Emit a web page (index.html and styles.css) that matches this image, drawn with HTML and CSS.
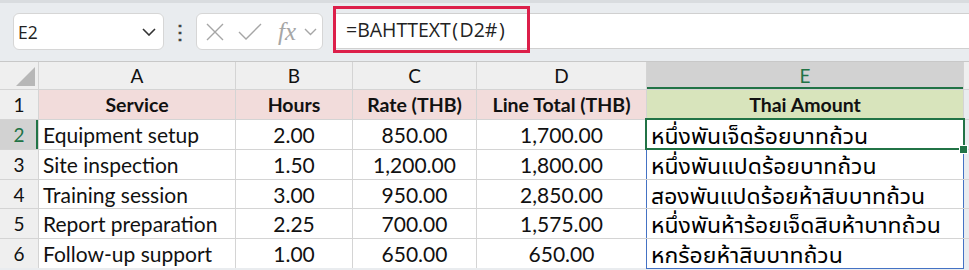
FILE: index.html
```html
<!DOCTYPE html>
<html lang="en">
<head>
    <meta charset="UTF-8">
    <title>BAHTTEXT</title>
    <link rel="stylesheet" href="styles.css">
</head>
<body>
    <div class="toolbar">
        <div class="name-box">
            <span>E2</span>
            <svg class="chev" width="14" height="8" viewBox="0 0 14 8"><path d="M1 1 L7 7 L13 1" fill="none" stroke="#333" stroke-width="1.6"/></svg>
        </div>
        <div class="dots">⋮</div>
        <div class="fx-box">
            <svg width="20" height="20" viewBox="0 0 20 20"><path d="M2 2 L18 18 M18 2 L2 18" stroke="#a6a6a6" stroke-width="1.4"/></svg>
            <svg width="26" height="20" viewBox="0 0 26 20"><path d="M2 10 L9 17 L24 2" fill="none" stroke="#a6a6a6" stroke-width="1.4"/></svg>
            <span class="fx">fx</span>
            <svg width="13" height="8" viewBox="0 0 13 8"><path d="M1 1 L6.5 6.5 L12 1" fill="none" stroke="#a6a6a6" stroke-width="1.4"/></svg>
        </div>
        <div class="formula-bar">
            <div class="formula">=BAHTTEXT<span class="paren">(</span>D2#<span class="paren">)</span></div>
        </div>
    </div>

    <div class="sheet">
        <div class="corner"><span class="tri"></span></div>
        <div class="col-head">A</div>
        <div class="col-head">B</div>
        <div class="col-head">C</div>
        <div class="col-head">D</div>
        <div class="col-head active">E</div>
        <div class="col-head rest"></div>

        <div class="row-head">1</div>
        <div class="cell th">Service</div>
        <div class="cell th">Hours</div>
        <div class="cell th">Rate (THB)</div>
        <div class="cell th">Line Total (THB)</div>
        <div class="cell th thai-head">Thai Amount</div>
        <div class="cell rest"></div>

        <div class="row-head active">2</div>
        <div class="cell">Equipment setup</div>
        <div class="cell num">2.00</div>
        <div class="cell num">850.00</div>
        <div class="cell num">1,700.00</div>
        <div class="cell thai selected">หนึ่งพันเจ็ดร้อยบาทถ้วน</div>
        <div class="cell rest"></div>

        <div class="row-head">3</div>
        <div class="cell">Site inspection</div>
        <div class="cell num">1.50</div>
        <div class="cell num">1,200.00</div>
        <div class="cell num">1,800.00</div>
        <div class="cell thai spill">หนึ่งพันแปดร้อยบาทถ้วน</div>
        <div class="cell rest"></div>

        <div class="row-head">4</div>
        <div class="cell">Training session</div>
        <div class="cell num">3.00</div>
        <div class="cell num">950.00</div>
        <div class="cell num">2,850.00</div>
        <div class="cell thai spill">สองพันแปดร้อยห้าสิบบาทถ้วน</div>
        <div class="cell rest"></div>

        <div class="row-head">5</div>
        <div class="cell">Report preparation</div>
        <div class="cell num">2.25</div>
        <div class="cell num">700.00</div>
        <div class="cell num">1,575.00</div>
        <div class="cell thai spill">หนึ่งพันห้าร้อยเจ็ดสิบห้าบาทถ้วน</div>
        <div class="cell rest"></div>

        <div class="row-head">6</div>
        <div class="cell">Follow-up support</div>
        <div class="cell num">1.00</div>
        <div class="cell num">650.00</div>
        <div class="cell num">650.00</div>
        <div class="cell thai spill last">หกร้อยห้าสิบบาทถ้วน</div>
        <div class="cell rest"></div>
    </div>
</body>
</html>
```

FILE: styles.css
```css
:root {
    --green: #217346;
    --blue: #4472c4;
    --grid: #d4d4d4;
    --head: #efefef;
}

* {
    box-sizing: border-box;
    margin: 0;
    padding: 0;
}

body {
    font-family: Lato, "Noto Sans", sans-serif;
    background: #e9ecef;
    width: 969px;
    height: 270px;
    overflow: hidden;
}

/* formula bar area */
.toolbar {
    height: 61px;
    display: flex;
    align-items: flex-start;
    border-top: 3px solid #d9dcdf;
    padding-top: 10px;
}

.name-box {
    width: 151px;
    height: 37px;
    margin-left: 13px;
    background: white;
    border: 1px solid #d6d6d6;
    border-radius: 6px;
    display: flex;
    align-items: center;
    justify-content: space-between;
    padding: 0 7px 0 4px;
    font-family: "Open Sans", sans-serif;
    font-size: 17.5px;
    color: #222;
}

.dots {
    width: 32px;
    text-align: center;
    font-size: 20px;
    line-height: 37px;
    color: #444;
    font-weight: bold;
}

.fx-box {
    width: 127px;
    height: 37px;
    background: white;
    border: 1px solid #d6d6d6;
    border-radius: 6px;
    display: flex;
    align-items: center;
    gap: 12px;
    padding-left: 8px;
}

.fx-box .fx {
    font-family: "Liberation Serif", serif;
    font-style: italic;
    font-size: 25px;
    line-height: 1;
    color: #a6a6a6;
    margin-right: -4px;
    margin-left: 3px;
}

.formula-bar {
    flex: 1;
    height: 36px;
    margin-left: 11px;
    background: white;
    border-top: 1px solid #d0d0d0;
    border-bottom: 1px solid #d0d0d0;
    position: relative;
}

.formula {
    position: absolute;
    left: -1px;
    top: -8px;
    width: 197px;
    height: 47px;
    border: 3px solid #dc1f4a;
    padding-left: 10px;
    display: flex;
    align-items: center;
    font-family: "Open Sans", sans-serif;
    font-size: 19.5px;
    color: #222;
}

.formula .paren {
    margin: 0 1.5px;
}

/* grid */
.sheet {
    display: grid;
    grid-template-columns: 38px 196px 116px 123px 169px 316px 1fr;
    grid-template-rows: 27px 29px 29px 29px 28px 29px 29px;
    gap: 1px;
    background: var(--grid);
    border-top: 1px solid #c8c8c8;
    font-size: 21px;
    color: #111;
}

.corner, .col-head, .row-head {
    background: var(--head);
    display: flex;
    align-items: center;
    justify-content: center;
    font-size: 19px;
}

.corner {
    position: relative;
}

.tri {
    position: absolute;
    right: 3px;
    bottom: 3px;
    width: 0;
    height: 0;
    border-left: 19px solid transparent;
    border-bottom: 19px solid #b7b7b7;
}

.col-head.active {
    background: #d2d2d2;
    color: var(--green);
    box-shadow: inset 0 -2px 0 var(--green);
}

.row-head.active {
    background: #d2d2d2;
    color: var(--green);
    box-shadow: inset -2px 0 0 var(--green);
}

.cell {
    background: white;
    display: flex;
    align-items: center;
    padding-left: 4px;
    padding-top: 1px;
    white-space: nowrap;
    line-height: 24px;
}

.cell.rest {
    background: #e9ecef;
}

.cell.th {
    background: #f2dcdb;
    font-weight: bold;
    font-size: 19.5px;
    justify-content: center;
    padding-left: 0;
}

.cell.thai-head {
    background: #d8e4bc;
}

.cell.num {
    justify-content: center;
    padding-left: 0;
}

.cell.thai {
    font-family: "Noto Sans Thai UI", "Noto Sans Thai", Tahoma, "DejaVu Sans", sans-serif;
    font-size: 23px;
    line-height: 26px;
    color: #000;
}

.cell.spill {
    box-shadow: -1px 0 0 var(--blue), 1px 0 0 var(--blue);
}

.cell.spill.last {
    box-shadow: -1px 0 0 var(--blue), 1px 0 0 var(--blue), 0 1px 0 var(--blue), -1px 1px 0 var(--blue), 1px 1px 0 var(--blue);
}

.cell.selected {
    position: relative;
    z-index: 2;
}

.cell.selected::before {
    content: "";
    position: absolute;
    inset: -2px -2px -1px -2px;
    border: 2px solid var(--green);
}

.cell.selected::after {
    content: "";
    position: absolute;
    right: -5px;
    bottom: -5px;
    width: 7px;
    height: 7px;
    background: var(--green);
    border: 1px solid white;
}
```
